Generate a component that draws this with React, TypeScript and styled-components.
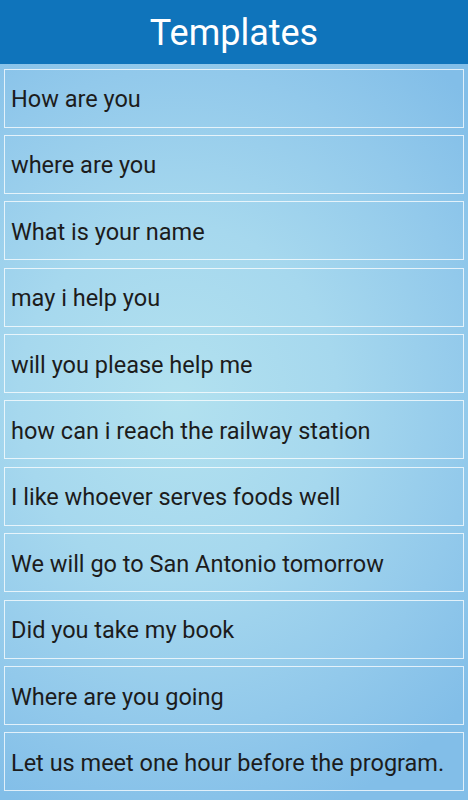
import React from 'react';
import styled, { createGlobalStyle } from 'styled-components';

const GlobalStyle = createGlobalStyle`
  html, body {
    margin: 0;
    padding: 0;
    height: 100%;
  }
  body {
    font-family: Roboto, 'Liberation Sans', sans-serif;
  }
`;

const Screen = styled.div`
  width: 468px;
  height: 800px;
  display: flex;
  flex-direction: column;
  overflow: hidden;
  background: radial-gradient(
    ellipse 85% 55% at 38% 50%,
    #b2e1ef 0%,
    #a6d8ee 40%,
    #92c9eb 75%,
    #82bee8 100%
  );
`;

const Header = styled.header`
  height: 64px;
  flex-shrink: 0;
  display: flex;
  align-items: center;
  justify-content: center;
  background: #0f74bb;
  color: #fff;
  font-size: 36px;
  font-weight: 400;
  padding-top: 2px;
  box-sizing: border-box;
`;

const List = styled.ul`
  list-style: none;
  margin: 0;
  padding: 4.5px 4px 0;
  display: flex;
  flex-direction: column;
  gap: 7.4px;
`;

const Row = styled.li`
  height: 59px;
  box-sizing: border-box;
  display: flex;
  align-items: center;
  padding: 2px 6px 0;
  border: 1px solid rgba(255, 255, 255, 0.75);
  color: #1c1c1c;
  font-size: 23.5px;
  white-space: nowrap;
`;

const templates = [
  'How are you',
  'where are you',
  'What is your name',
  'may i help you',
  'will you please help me',
  'how can i reach the railway station',
  'I like whoever serves foods well',
  'We will go to San Antonio tomorrow',
  'Did you take my book',
  'Where are you going',
  'Let us meet one hour before the program.',
];

export default function App() {
  return (
    <>
      <GlobalStyle />
      <Screen>
        <Header>Templates</Header>
        <List>
          {templates.map((t) => (
            <Row key={t}>{t}</Row>
          ))}
        </List>
      </Screen>
    </>
  );
}
